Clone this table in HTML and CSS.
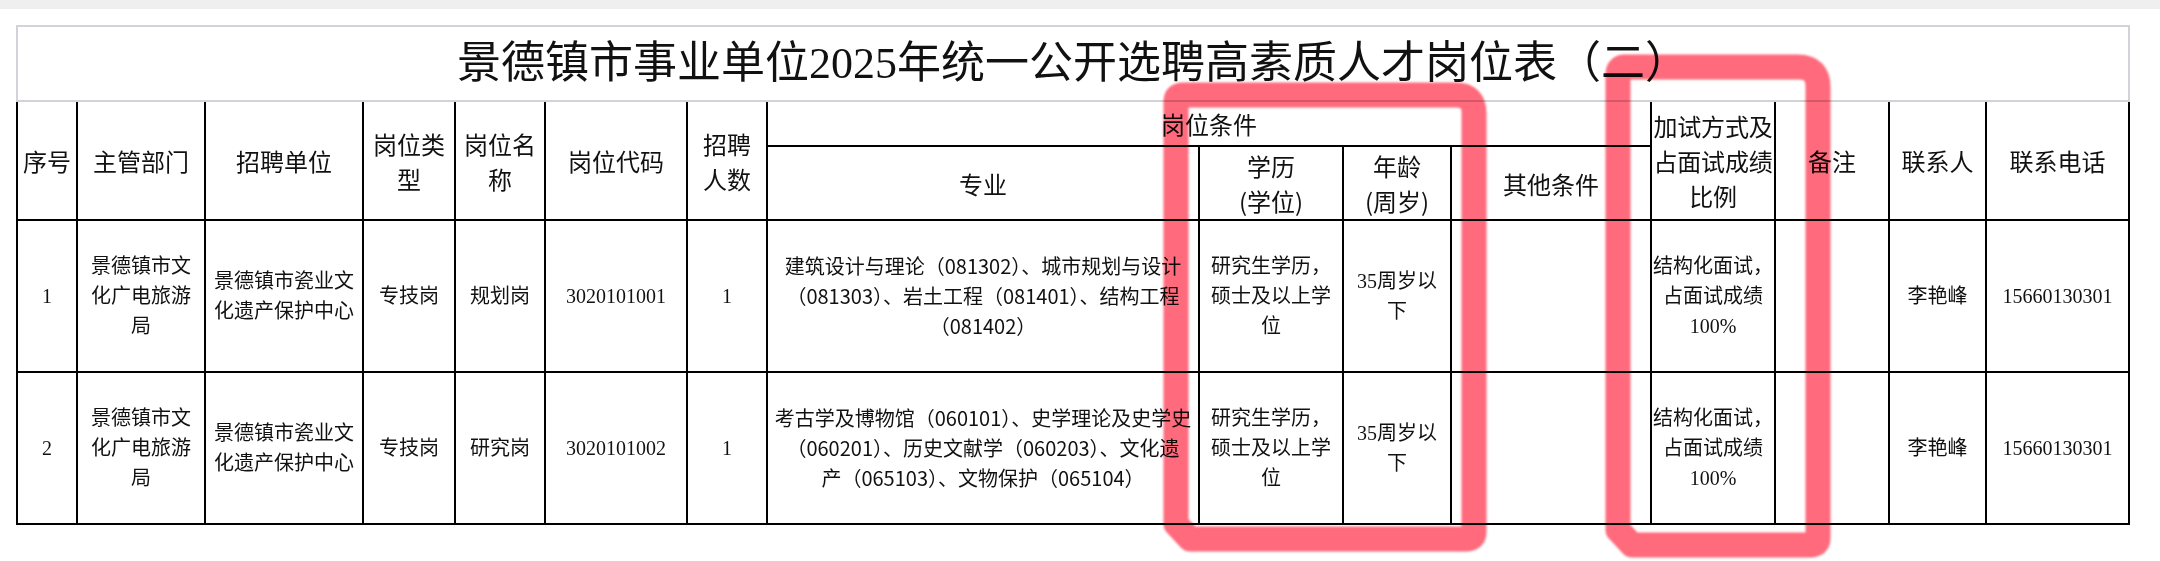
FILE: index.html
```html
<!DOCTYPE html>
<html lang="zh-CN">
<head>
<meta charset="utf-8">
<title>岗位表</title>
<link rel="stylesheet" href="styles.css">
</head>
<body>
<div class="topbar"></div>
<div class="sheet">
  <div class="title">景德镇市事业单位2025年统一公开选聘高素质人才岗位表（二）</div>
  <div class="grid">
    <div class="c h span2 c1">序号</div>
    <div class="c h span2">主管部门</div>
    <div class="c h span2">招聘单位</div>
    <div class="c h span2">岗位类<br>型</div>
    <div class="c h span2">岗位名<br>称</div>
    <div class="c h span2">岗位代码</div>
    <div class="c h span2">招聘<br>人数</div>
    <div class="c h cond">岗位条件</div>
    <div class="c h span2 tight">加试方式及<br>占面试成绩<br>比例</div>
    <div class="c h span2">备注</div>
    <div class="c h span2">联系人</div>
    <div class="c h span2">联系电话</div>
    <div class="c h">专业</div>
    <div class="c h">学历<br>(学位)</div>
    <div class="c h">年龄<br>(周岁)</div>
    <div class="c h">其他条件</div>

    <div class="c b c1">1</div>
    <div class="c b">景德镇市文<br>化广电旅游<br>局</div>
    <div class="c b">景德镇市瓷业文<br>化遗产保护中心</div>
    <div class="c b">专技岗</div>
    <div class="c b">规划岗</div>
    <div class="c b">3020101001</div>
    <div class="c b">1</div>
    <div class="c b sans">建筑设计与理论（081302）、城市规划与设计<br>（081303）、岩土工程（081401）、结构工程<br>（081402）</div>
    <div class="c b">研究生学历，<br>硕士及以上学<br>位</div>
    <div class="c b">35周岁以<br>下</div>
    <div class="c b"></div>
    <div class="c b">结构化面试，<br>占面试成绩<br>100%</div>
    <div class="c b"></div>
    <div class="c b">李艳峰</div>
    <div class="c b">15660130301</div>

    <div class="c b c1">2</div>
    <div class="c b">景德镇市文<br>化广电旅游<br>局</div>
    <div class="c b">景德镇市瓷业文<br>化遗产保护中心</div>
    <div class="c b">专技岗</div>
    <div class="c b">研究岗</div>
    <div class="c b">3020101002</div>
    <div class="c b">1</div>
    <div class="c b sans">考古学及博物馆（060101）、史学理论及史学史<br>（060201）、历史文献学（060203）、文化遗<br>产（065103）、文物保护（065104）</div>
    <div class="c b">研究生学历，<br>硕士及以上学<br>位</div>
    <div class="c b">35周岁以<br>下</div>
    <div class="c b"></div>
    <div class="c b">结构化面试，<br>占面试成绩<br>100%</div>
    <div class="c b"></div>
    <div class="c b">李艳峰</div>
    <div class="c b">15660130301</div>
  </div>
</div>
<svg class="marks" width="2160" height="561" viewBox="0 0 2160 561" xmlns="http://www.w3.org/2000/svg">
  <defs>
    <filter id="soft" x="-5%" y="-5%" width="110%" height="110%">
      <feGaussianBlur stdDeviation="1.3"/>
    </filter>
  </defs>
  <g fill="none" stroke="#ff6a7c" stroke-width="25" stroke-linejoin="round" stroke-linecap="round" filter="url(#soft)">
    <path d="M1190,539 L1176,524 L1176,101 Q1176,95 1183,95 L1456,95 Q1474,95 1474,113 L1474,532 Q1474,539 1467,539 Z"/>
    <path d="M1632,545 L1618,530 L1618,74 Q1618,67 1625,67 L1798,67 Q1818,67 1818,87 L1818,538 Q1818,545 1811,545 Z"/>
  </g>
</svg>
</body>
</html>
```

FILE: styles.css
```css
html, body {
  margin: 0;
  padding: 0;
  background: #ffffff;
}
body {
  width: 2160px;
  height: 561px;
  position: relative;
  overflow: hidden;
  color: #111111;
  font-family: "Liberation Serif", "Noto Sans CJK SC", serif;
}
.topbar {
  height: 9px;
  background: #efefef;
}
.sheet {
  margin: 16px 0 0 16px;
  width: 2114px;
}
.title {
  box-sizing: border-box;
  height: 77px;
  border: 2px solid #d2d2d8;
  display: flex;
  align-items: center;
  justify-content: center;
  font-size: 44px;
  line-height: 1;
  white-space: nowrap;
}
.grid {
  display: grid;
  grid-template-columns: 60px 128px 158px 92px 90px 142px 80px 432px 144px 108px 200px 124px 114px 97px 143px;
  grid-template-rows: 45px 74px 152px 152px;
  border-left: 2px solid #000;
  width: 2112px;
}
.c {
  border-right: 2px solid #000;
  border-bottom: 2px solid #000;
  display: flex;
  align-items: center;
  justify-content: center;
  text-align: center;
  white-space: nowrap;
  overflow: visible;
  min-width: 0;
}
.h {
  font-family: "Noto Sans CJK SC", sans-serif;
  font-size: 24px;
  line-height: 35px;
}
.span2 {
  grid-row: span 2;
}
.cond {
  grid-column: span 4;
}
.tight {
  letter-spacing: -0.2px;
}
.b {
  font-size: 20px;
  line-height: 30px;
}
.sans {
  font-family: "Noto Sans CJK SC", sans-serif;
}
.marks {
  position: absolute;
  left: 0;
  top: 0;
  pointer-events: none;
  mix-blend-mode: multiply;
}
```
